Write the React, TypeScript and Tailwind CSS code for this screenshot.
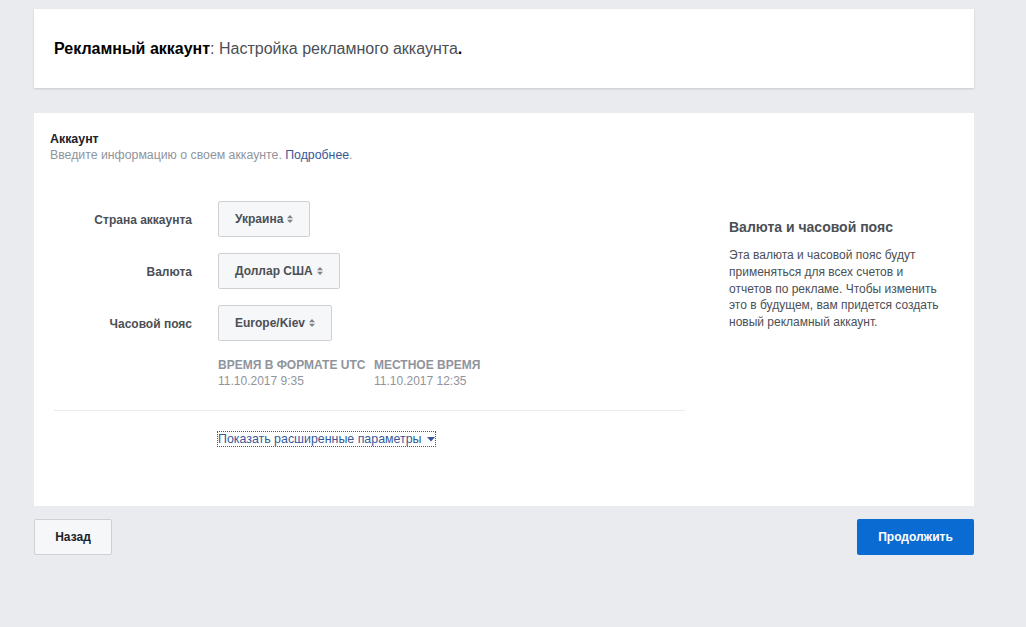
import React from "react";

const font = { fontFamily: '"Liberation Sans", Arial, Helvetica, sans-serif' };

function Sort() {
  return (
    <svg width="6" height="8" viewBox="0 0 6 8" className="ml-[4px] inline-block">
      <path d="M3 0 L6 3.2 L0 3.2 Z" fill="#7f8389" />
      <path d="M3 8 L6 4.8 L0 4.8 Z" fill="#7f8389" />
    </svg>
  );
}

function Select({ value }: { value: string }) {
  return (
    <button className="flex h-[36px] items-center rounded-[2px] border border-[#ced0d4] bg-[#f6f7f9] px-[16px] text-[12px] font-bold text-[#4b4f56]">
      {value}
      <Sort />
    </button>
  );
}

function Row({ label, value }: { label: string; value: string }) {
  return (
    <div className="flex items-center">
      <div className="w-[138px] pt-[2px] text-right text-[12px] font-bold text-[#4b4f56]">{label}</div>
      <div className="ml-[26px]">
        <Select value={value} />
      </div>
    </div>
  );
}

export default function App() {
  return (
    <div className="min-h-screen bg-[#e9ebee] pt-[9px]" style={font}>
      <div className="ml-[34px] w-[940px]">
        <div className="flex h-[79px] items-center bg-white px-[20px] shadow-[0_1px_2px_rgba(0,0,0,0.15)]">
          <div className="text-[16px] text-[#4b4f56]">
            <span className="font-bold text-black">Рекламный аккаунт</span>: Настройка рекламного аккаунта
            <span className="font-bold text-black">.</span>
          </div>
        </div>

        <div className="mt-[25px] flex h-[393px] bg-white">
          <div className="w-[651px]">
            <div className="px-[16px] pt-[18px]">
              <div className="text-[12.4px] font-bold leading-[16px] text-[#1d2129]">Аккаунт</div>
              <div className="text-[12.3px] leading-[16px] text-[#90949c]">
                Введите информацию о своем аккаунте. <span className="text-[#365899]">Подробнее</span>.
              </div>
            </div>
            <div className="ml-[20px] mt-[38px]">
              <div className="flex flex-col gap-[16px]">
                <Row label="Страна аккаунта" value="Украина" />
                <Row label="Валюта" value="Доллар США" />
                <Row label="Часовой пояс" value="Europe/Kiev" />
              </div>
              <div className="ml-[164px] mt-[16px] flex text-[12px] leading-[16px] text-[#90949c]">
                <div className="w-[156px]">
                  <div className="font-bold">ВРЕМЯ В ФОРМАТЕ UTC</div>
                  <div>11.10.2017 9:35</div>
                </div>
                <div>
                  <div className="font-bold">МЕСТНОЕ ВРЕМЯ</div>
                  <div>11.10.2017 12:35</div>
                </div>
              </div>
              <div className="mt-[21px] h-px bg-[#e9ebee]" />
              <div className="ml-[164px] mt-[15px]">
                <span className="inline-flex items-center outline-1 outline-dotted outline-[#365899] text-[12.4px] leading-[14px] text-[#365899]">
                  Показать расширенные параметры
                  <svg width="8" height="5" viewBox="0 0 8 5" className="ml-[5px]">
                    <path d="M0 0 L8 0 L4 4.5 Z" fill="#365899" />
                  </svg>
                </span>
              </div>
            </div>
          </div>
          <div className="ml-[44px] w-[218px] pt-[105px]">
            <div className="text-[14px] font-bold leading-[18px] text-[#4b4f56]">Валюта и часовой пояс</div>
            <div className="mt-[11px] text-[12px] leading-[16.8px] text-[#4b4f56]">
              Эта валюта и часовой пояс будут применяться для всех счетов и отчетов по рекламе. Чтобы изменить это в будущем, вам придется создать новый рекламный аккаунт.
            </div>
          </div>
        </div>

        <div className="mt-[13px] flex justify-between">
          <button className="h-[36px] w-[78px] rounded-[2px] border border-[#ced0d4] bg-[#f6f7f9] text-[12px] font-bold text-[#1d2129]">
            Назад
          </button>
          <button className="h-[36px] w-[117px] rounded-[2px] bg-[#0a6bd3] text-[12px] font-bold text-white">
            Продолжить
          </button>
        </div>
      </div>
    </div>
  );
}
